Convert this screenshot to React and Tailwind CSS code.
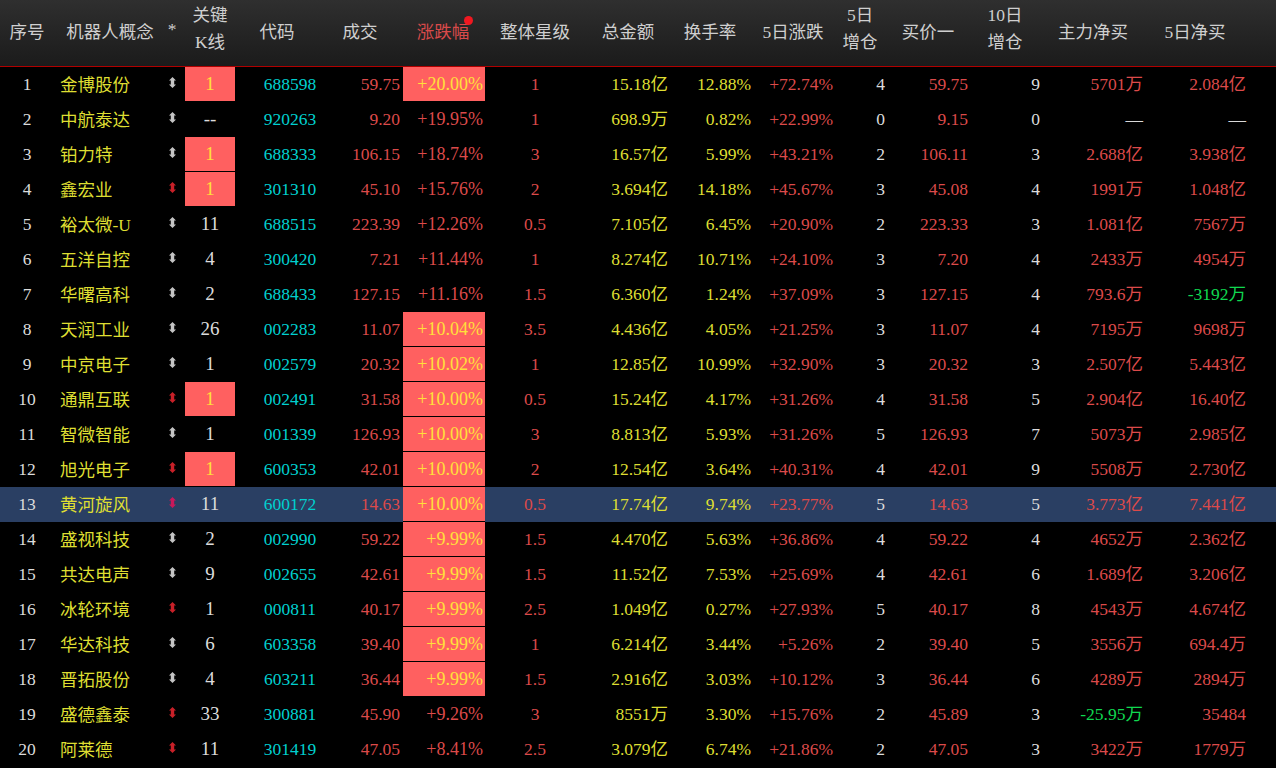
const FONT = "font-['Liberation_Serif','Noto_Sans_CJK_SC',serif]";

const HEADERS = [
  { w: 'w-[54px]', lines: ['序号'] },
  { w: 'w-[112px]', lines: ['机器人概念'] },
  { w: 'w-[12px]', lines: ['*'], star: true },
  { w: 'w-[64px]', lines: ['关键', 'K线'] },
  { w: 'w-[70px]', lines: ['代码'] },
  { w: 'w-[96px]', lines: ['成交'] },
  { w: 'w-[70px]', lines: ['涨跌幅'], active: true },
  { w: 'w-[114px]', lines: ['整体星级'] },
  { w: 'w-[72px]', lines: ['总金额'] },
  { w: 'w-[92px]', lines: ['换手率'] },
  { w: 'w-[74px]', lines: ['5日涨跌'] },
  { w: 'w-[60px]', lines: ['5日', '增仓'] },
  { w: 'w-[76px]', lines: ['买价一'] },
  { w: 'w-[78px]', lines: ['10日', '增仓'] },
  { w: 'w-[98px]', lines: ['主力净买'] },
  { w: 'w-[106px]', lines: ['5日净买'] },
];

// name, arrow red, k, k box, code, price, pct, pct box, rating, amount, turnover, 5d chg, 5d add, bid, 10d add, main, 5d net
const ROWS = [
  ['金博股份', 0, '1', 1, '688598', '59.75', '+20.00%', 1, '1', '15.18亿', '12.88%', '+72.74%', '4', '59.75', '9', '5701万', '2.084亿'],
  ['中航泰达', 0, '--', 0, '920263', '9.20', '+19.95%', 0, '1', '698.9万', '0.82%', '+22.99%', '0', '9.15', '0', '—', '—'],
  ['铂力特', 0, '1', 1, '688333', '106.15', '+18.74%', 0, '3', '16.57亿', '5.99%', '+43.21%', '2', '106.11', '3', '2.688亿', '3.938亿'],
  ['鑫宏业', 1, '1', 1, '301310', '45.10', '+15.76%', 0, '2', '3.694亿', '14.18%', '+45.67%', '3', '45.08', '4', '1991万', '1.048亿'],
  ['裕太微-U', 0, '11', 0, '688515', '223.39', '+12.26%', 0, '0.5', '7.105亿', '6.45%', '+20.90%', '2', '223.33', '3', '1.081亿', '7567万'],
  ['五洋自控', 0, '4', 0, '300420', '7.21', '+11.44%', 0, '1', '8.274亿', '10.71%', '+24.10%', '3', '7.20', '4', '2433万', '4954万'],
  ['华曙高科', 0, '2', 0, '688433', '127.15', '+11.16%', 0, '1.5', '6.360亿', '1.24%', '+37.09%', '3', '127.15', '4', '793.6万', '-3192万'],
  ['天润工业', 0, '26', 0, '002283', '11.07', '+10.04%', 1, '3.5', '4.436亿', '4.05%', '+21.25%', '3', '11.07', '4', '7195万', '9698万'],
  ['中京电子', 0, '1', 0, '002579', '20.32', '+10.02%', 1, '1', '12.85亿', '10.99%', '+32.90%', '3', '20.32', '3', '2.507亿', '5.443亿'],
  ['通鼎互联', 1, '1', 1, '002491', '31.58', '+10.00%', 1, '0.5', '15.24亿', '4.17%', '+31.26%', '4', '31.58', '5', '2.904亿', '16.40亿'],
  ['智微智能', 0, '1', 0, '001339', '126.93', '+10.00%', 1, '3', '8.813亿', '5.93%', '+31.26%', '5', '126.93', '7', '5073万', '2.985亿'],
  ['旭光电子', 1, '1', 1, '600353', '42.01', '+10.00%', 1, '2', '12.54亿', '3.64%', '+40.31%', '4', '42.01', '9', '5508万', '2.730亿'],
  ['黄河旋风', 1, '11', 0, '600172', '14.63', '+10.00%', 1, '0.5', '17.74亿', '9.74%', '+23.77%', '5', '14.63', '5', '3.773亿', '7.441亿'],
  ['盛视科技', 0, '2', 0, '002990', '59.22', '+9.99%', 1, '1.5', '4.470亿', '5.63%', '+36.86%', '4', '59.22', '4', '4652万', '2.362亿'],
  ['共达电声', 0, '9', 0, '002655', '42.61', '+9.99%', 1, '1.5', '11.52亿', '7.53%', '+25.69%', '4', '42.61', '6', '1.689亿', '3.206亿'],
  ['冰轮环境', 1, '1', 0, '000811', '40.17', '+9.99%', 1, '2.5', '1.049亿', '0.27%', '+27.93%', '5', '40.17', '8', '4543万', '4.674亿'],
  ['华达科技', 0, '6', 0, '603358', '39.40', '+9.99%', 1, '1', '6.214亿', '3.44%', '+5.26%', '2', '39.40', '5', '3556万', '694.4万'],
  ['晋拓股份', 0, '4', 0, '603211', '36.44', '+9.99%', 1, '1.5', '2.916亿', '3.03%', '+10.12%', '3', '36.44', '6', '4289万', '2894万'],
  ['盛德鑫泰', 1, '33', 0, '300881', '45.90', '+9.26%', 0, '3', '8551万', '3.30%', '+15.76%', '2', '45.89', '3', '-25.95万', '35484'],
  ['阿莱德', 1, '11', 0, '301419', '47.05', '+8.41%', 0, '2.5', '3.079亿', '6.74%', '+21.86%', '2', '47.05', '3', '3422万', '1779万'],
];

const SELECTED = 12;

function netColor(v) {
  if (v === '—') return 'text-[#d8d8d8]';
  return v.startsWith('-') ? 'text-[#10d850]' : 'text-[#dc4a4a]';
}

function SortArrow({ red, selected }) {
  const color = selected ? 'text-[#c8185a]' : red ? 'text-[#c82028]' : 'text-[#c4c4c4]';
  return (
    <svg width="7" height="11" viewBox="0 0 7 11" className={`${color} -mt-[4px]`} fill="currentColor">
      <path d="M3.5 0 L7 3.6 L5.2 3.6 L5.2 7.4 L7 7.4 L3.5 11 L0 7.4 L1.8 7.4 L1.8 3.6 L0 3.6 Z" />
    </svg>
  );
}

function Row({ row, index }) {
  const [name, red, k, kBox, code, price, pct, pctBox, rating, amount, turn, chg5, add5, bid, add10, main, net5] = row;
  const selected = index === SELECTED;
  return (
    <div className={`flex h-[35px] items-center text-[17.5px] ${selected ? 'bg-[#2a3f63]' : ''}`}>
      <div className="w-[54px] text-center text-[#dcdcdc]">{index + 1}</div>
      <div className="w-[106px] pt-[2px] pl-[6px] text-[#dede32]">{name}</div>
      <div className="flex w-[25px] justify-center"><SortArrow red={red} selected={selected} /></div>
      <div className={`flex h-full w-[50px] items-center justify-center text-[19px] ${kBox ? 'border-b border-black bg-[#ff6060] text-[#ffe03a]' : 'text-[#dcdcdc]'}`}>{k}</div>
      <div className="w-[110px] text-center text-[#00d0d0]">{code}</div>
      <div className="w-[58px] pr-[3px] text-right text-[#dc4a4a]">{price}</div>
      <div className={`flex h-full w-[82px] items-center justify-end pr-[2px] text-[18px] ${pctBox ? 'border-b border-black bg-[#ff6060] text-[#ffe03a]' : 'text-[#dc4a4a]'}`}>{pct}</div>
      <div className="w-[100px] text-center text-[#dc4a4a]">{rating}</div>
      <div className="w-[83px] text-right text-[#dede32]">{amount}</div>
      <div className="w-[83px] text-right text-[#dede32]">{turn}</div>
      <div className="w-[82px] text-right text-[#dc4a4a]">{chg5}</div>
      <div className="w-[52px] text-right text-[#dcdcdc]">{add5}</div>
      <div className="w-[83px] text-right text-[#dc4a4a]">{bid}</div>
      <div className="w-[72px] text-right text-[#dcdcdc]">{add10}</div>
      <div className={`w-[103px] text-right ${netColor(main)}`}>{main}</div>
      <div className={`w-[103px] text-right ${netColor(net5)}`}>{net5}</div>
    </div>
  );
}

export default function App() {
  return (
    <div className={`h-[768px] w-[1276px] overflow-hidden bg-black ${FONT}`}>
      <div className="flex h-[67px] items-center border-b border-[#b00000] bg-gradient-to-b from-[#2f2f2f] to-[#1b1b1b] text-[17.5px] text-[#cfcfcf]">
        {HEADERS.map((h, i) => (
          <div
            key={i}
            className={`relative text-center leading-[27px] ${h.w} ${h.lines.length > 1 ? '-mt-[8px]' : h.star ? '-mt-[8px]' : '-mt-[2px]'} ${h.active ? 'text-[#d84a4a]' : ''}`}
          >
            {h.lines.map((line) => <div key={line}>{line}</div>)}
            {h.active && <span className="absolute top-[-3px] right-[5px] h-[9px] w-[9px] rounded-full bg-[#f01820]" />}
          </div>
        ))}
      </div>
      {ROWS.map((row, i) => <Row key={i} row={row} index={i} />)}
    </div>
  );
}
